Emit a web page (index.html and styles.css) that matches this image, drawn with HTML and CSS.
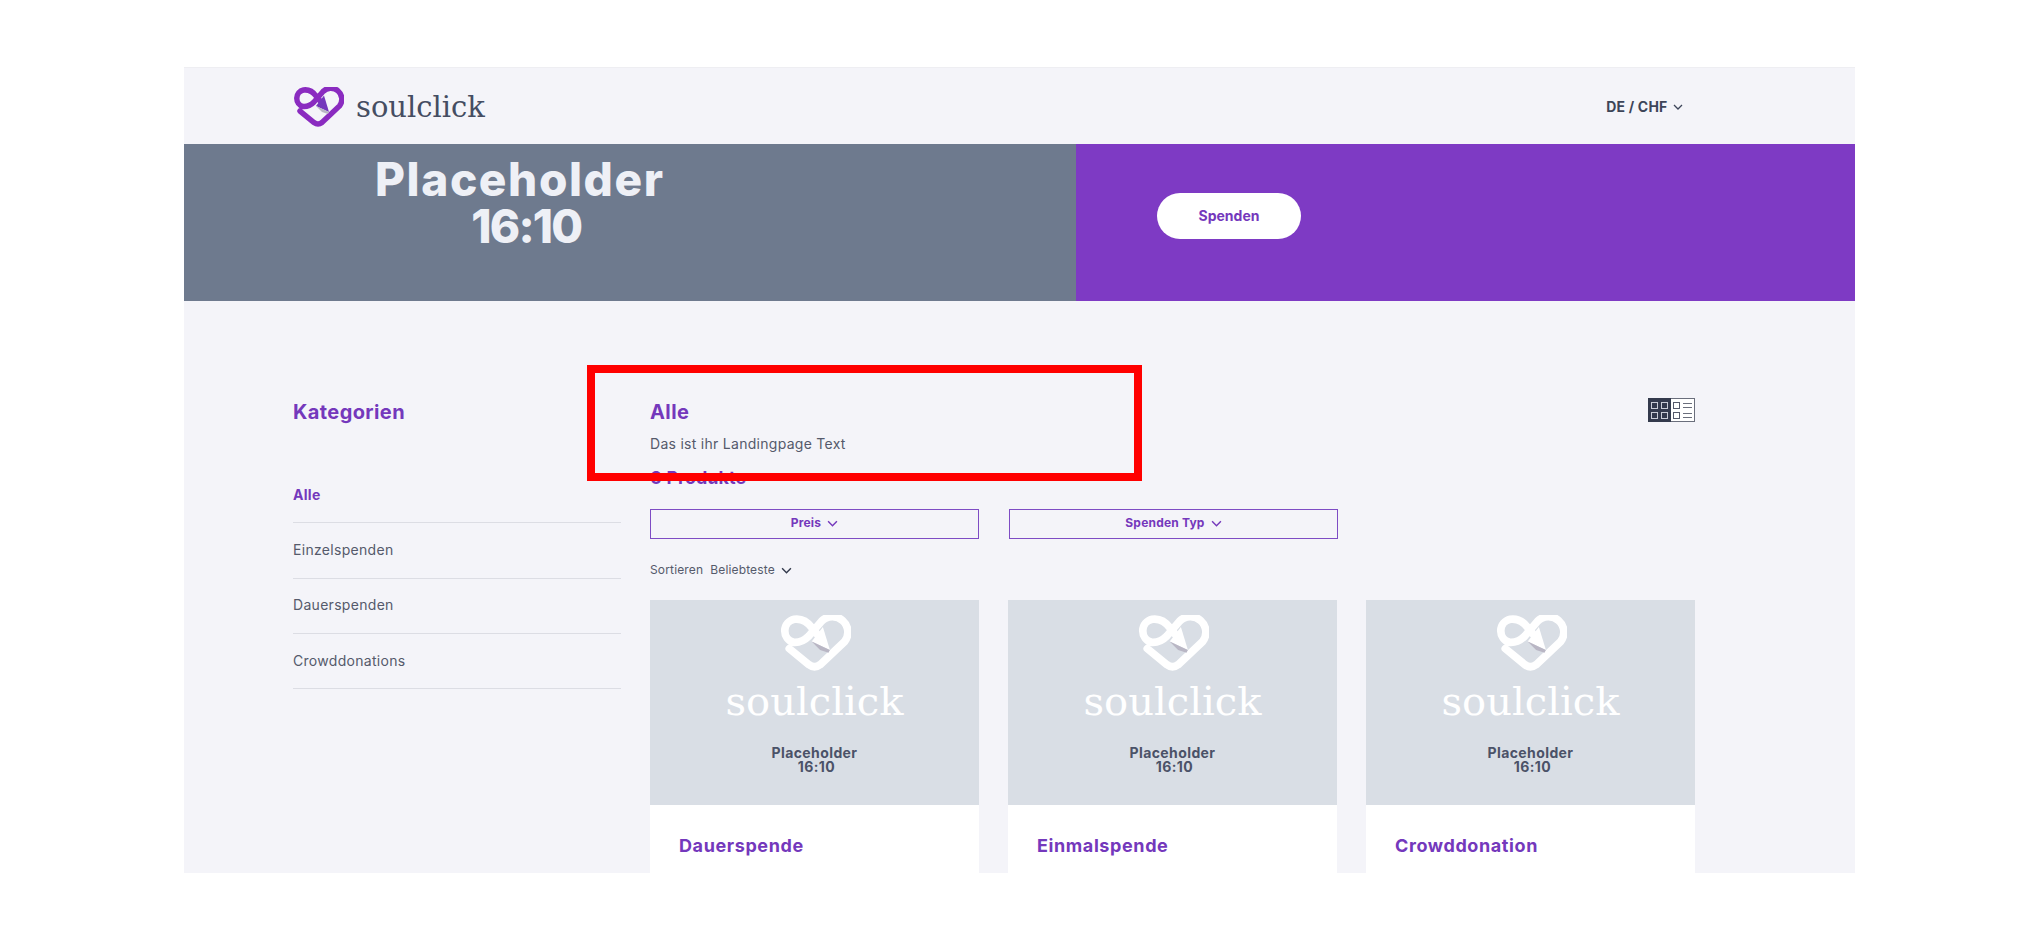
FILE: index.html
```html
<!DOCTYPE html>
<html lang="de">
<head>
    <meta charset="UTF-8">
    <meta name="viewport" content="width=device-width, initial-scale=1.0">
    <title>soulclick</title>
    <link rel="stylesheet" href="styles.css">
</head>
<body>
    <svg class="defs" width="0" height="0" aria-hidden="true">
        <symbol id="heart" viewBox="0 0 52 40">
            <path d="M8 24 L22 35.5 Q26 38.5 30 35.5 L47.5 19 A11 11 0 0 0 31 4.5 L22 15 Q17 20 11 19.5 A8.5 8.5 0 0 1 11.5 3 Q19 2 24 9 L29 15" fill="none" stroke="currentColor" stroke-width="5.5" stroke-linecap="round"/>
            <path d="M32 8.5 L37 25 L24 19 Z" class="arrow"/>
            <path d="M24 19 L37 25 L36 27 L30 25 Z" fill="#b9b6c4"/>
        </symbol>
        <symbol id="chev" viewBox="0 0 10 6">
            <path d="M1 1 L5 5 L9 1" fill="none" stroke="currentColor" stroke-width="1.3"/>
        </symbol>
    </svg>

    <div class="page">
        <header class="topbar">
            <a class="brand">
                <svg class="brand-icon"><use href="#heart"/></svg>
                <span class="brand-name">soulclick</span>
            </a>
            <div class="lang">DE / CHF <svg class="chev-sm"><use href="#chev"/></svg></div>
        </header>

        <section class="hero">
            <div class="hero-left">
                <div class="hero-text">Placeholder<span class="hero-ratio">16:10</span></div>
            </div>
            <div class="hero-right">
                <button class="donate">Spenden</button>
            </div>
        </section>

        <div class="content">
            <aside class="sidebar">
                <h2>Kategorien</h2>
                <ul class="cats">
                    <li class="active">Alle</li>
                    <li>Einzelspenden</li>
                    <li>Dauerspenden</li>
                    <li>Crowddonations</li>
                </ul>
            </aside>

            <main class="listing">
                <div class="listing-head">
                    <div>
                        <h2>Alle</h2>
                        <p class="lead">Das ist ihr Landingpage Text</p>
                    </div>
                    <div class="view-toggle">
                        <span class="view-grid">
                            <i></i><i></i><i></i><i></i>
                        </span>
                        <span class="view-list">
                            <i></i><b></b><i></i><b></b>
                        </span>
                    </div>
                </div>
                <h3 class="count">0 Produkte</h3>

                <div class="filters">
                    <button class="filter">Preis <svg class="chev"><use href="#chev"/></svg></button>
                    <button class="filter">Spenden Typ <svg class="chev"><use href="#chev"/></svg></button>
                </div>

                <div class="sort">Sortieren&nbsp; Beliebteste <svg class="chev"><use href="#chev"/></svg></div>

                <div class="cards">
                    <article class="card">
                        <div class="card-img">
                            <svg class="card-icon"><use href="#heart"/></svg>
                            <div class="card-logo">soulclick</div>
                            <div class="card-ph">Placeholder<span>16:10</span></div>
                        </div>
                        <h4>Dauerspende</h4>
                    </article>
                    <article class="card">
                        <div class="card-img">
                            <svg class="card-icon"><use href="#heart"/></svg>
                            <div class="card-logo">soulclick</div>
                            <div class="card-ph">Placeholder<span>16:10</span></div>
                        </div>
                        <h4>Einmalspende</h4>
                    </article>
                    <article class="card">
                        <div class="card-img">
                            <svg class="card-icon"><use href="#heart"/></svg>
                            <div class="card-logo">soulclick</div>
                            <div class="card-ph">Placeholder<span>16:10</span></div>
                        </div>
                        <h4>Crowddonation</h4>
                    </article>
                </div>
            </main>
        </div>

        <div class="marker"></div>
    </div>
</body>
</html>
```

FILE: styles.css
```css
* {
    box-sizing: border-box;
}
html, body {
    height: 100%;
}
body {
    margin: 0;
    background: #fff;
    font-family: Inter, "Noto Sans", sans-serif;
    color: #3d4559;
    overflow: hidden;
}
.defs {
    position: absolute;
}
.page {
    position: relative;
    width: 1671px;
    height: 806px;
    margin: 67px 0 0 184px;
    background: #f4f4f9;
    overflow: hidden;
}
.topbar {
    display: flex;
    align-items: center;
    justify-content: space-between;
    height: 77px;
    padding: 1px 172px 0 108px;
    border-top: 1px solid #eeeef2;
}
.brand {
    display: flex;
    align-items: center;
    gap: 12px;
}
.brand-icon {
    width: 52px;
    height: 40px;
    color: #8a2bc0;
    --arrow: #7438bc;
}
.arrow {
    fill: var(--arrow, currentColor);
}
.brand-name {
    font-family: "DejaVu Serif", serif;
    font-size: 29px;
    color: #454d62;
}
.lang {
    font-size: 14px;
    font-weight: 700;
    letter-spacing: 0.2px;
}
.chev-sm {
    width: 10px;
    height: 6px;
    margin-left: 2px;
    vertical-align: 2px;
}
.hero {
    display: flex;
    height: 157px;
}
.hero-left {
    width: 892px;
    padding: 12px 0 0 191px;
    background: #6e7a8e;
}
.hero-text {
    display: inline-block;
    color: #eef0f6;
    font-size: 46px;
    font-weight: 800;
    letter-spacing: 1.6px;
    line-height: 47px;
    text-align: center;
}
.hero-ratio {
    display: block;
    padding-left: 13px;
    letter-spacing: -1.8px;
}
.hero-right {
    flex: 1;
    padding: 49px 0 0 81px;
    background: #7e3ac4;
}
.donate {
    width: 144px;
    height: 46px;
    padding-bottom: 3px;
    border: none;
    border-radius: 23px;
    background: #fff;
    color: #7438bc;
    font-family: inherit;
    font-size: 14px;
    font-weight: 700;
}
.content {
    display: flex;
    gap: 29px;
    padding: 99px 0 0 109px;
}
h2 {
    margin: 0;
    font-size: 20px;
    font-weight: 700;
    letter-spacing: 0.4px;
    line-height: 25px;
    color: #7438bc;
}
.sidebar {
    width: 328px;
}
.cats {
    list-style: none;
    margin: 43px 0 0;
    padding: 0;
}
.cats li {
    display: flex;
    align-items: center;
    height: 55.3px;
    padding-bottom: 2px;
    border-bottom: 1px solid #dcdde4;
    font-size: 14px;
    letter-spacing: 0.3px;
    color: #555a6b;
}
.cats li.active {
    font-weight: 700;
    color: #7438bc;
}
.listing {
    width: 1045px;
}
.listing-head {
    display: flex;
    justify-content: space-between;
    align-items: flex-start;
}
.lead {
    margin: 9px 0 0;
    font-size: 14px;
    letter-spacing: 0.28px;
    line-height: 20px;
    color: #555a6b;
}
.view-toggle {
    display: flex;
    width: 47px;
    height: 24px;
    margin-top: -2px;
}
.view-grid,
.view-list {
    display: grid;
    flex: 1;
    align-content: center;
    justify-content: center;
}
.view-grid {
    grid-template-columns: 7px 7px;
    gap: 3px;
    background: #333a4d;
}
.view-grid i {
    height: 7px;
    border: 1.5px solid #c9ccd6;
}
.view-list {
    grid-template-columns: 7px 9px;
    gap: 3px;
    background: #fff;
    border: 1px solid #6a6e7c;
    border-left: none;
}
.view-list i {
    height: 7px;
    border: 1.5px solid #555a6b;
}
.view-list b {
    height: 5px;
    margin-top: 1px;
    border-top: 1.5px solid #6a6e7c;
    border-bottom: 1.5px solid #6a6e7c;
}
.count {
    margin: 12px 0 0;
    font-size: 18px;
    font-weight: 700;
    line-height: 24px;
    color: #7438bc;
}
.filters,
.cards {
    display: grid;
    grid-template-columns: repeat(3, 329px);
    gap: 29px;
}
.filters {
    gap: 30px;
    margin-top: 19px;
}
.filter {
    height: 30px;
    padding-bottom: 4px;
    border: 1px solid #7e4cc4;
    background: transparent;
    color: #7438bc;
    font-family: inherit;
    font-size: 12px;
    font-weight: 700;
    letter-spacing: 0.2px;
}
.chev {
    width: 11px;
    height: 7px;
    margin-left: 3px;
}
.sort {
    margin-top: 21px;
    font-size: 12px;
    letter-spacing: 0.15px;
    line-height: 20px;
    color: #555a6b;
}
.sort .chev {
    color: #333a4d;
}
.cards {
    margin-top: 20px;
}
.card {
    min-height: 300px;
    background: #fff;
}
.card-img {
    display: flex;
    flex-direction: column;
    align-items: center;
    height: 205px;
    padding-top: 15px;
    background: #d9dee5;
}
.card-icon {
    width: 73px;
    height: 56px;
    color: #fff;
}
.card-logo {
    font-family: "DejaVu Serif", serif;
    font-size: 40px;
    line-height: 50px;
    margin-top: 5px;
    color: #fff;
}
.card-ph {
    margin-top: 20px;
    font-size: 14px;
    font-weight: 700;
    letter-spacing: 0.4px;
    line-height: 14px;
    text-align: center;
    color: #4b5268;
}
.card-ph span {
    display: block;
    padding-left: 4px;
}
.card h4 {
    margin: 0;
    padding: 29px 29px 0;
    font-size: 18px;
    font-weight: 700;
    letter-spacing: 0.6px;
    line-height: 24px;
    color: #7438bc;
}
/* annotation drawn over the screenshot */
.marker {
    position: absolute;
    top: 298px;
    left: 403px;
    width: 555px;
    height: 116px;
    border: 8px solid #f00;
}
```
